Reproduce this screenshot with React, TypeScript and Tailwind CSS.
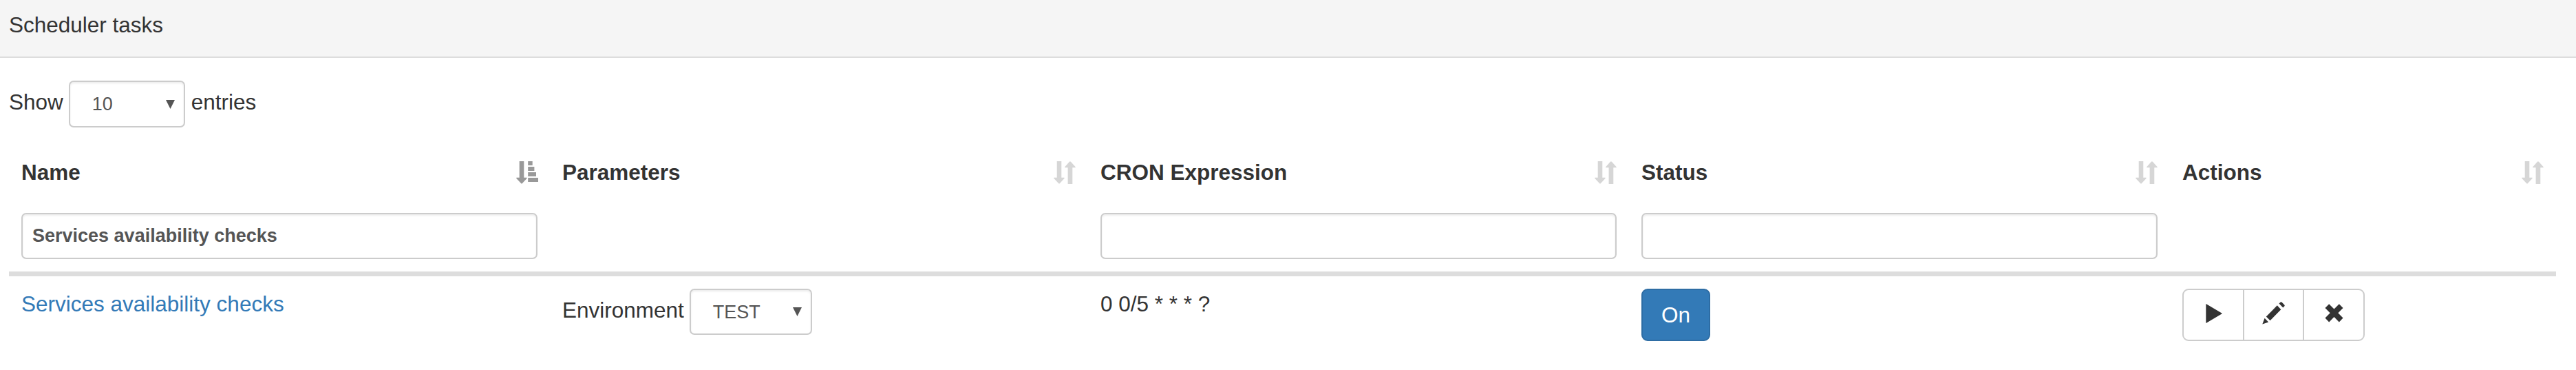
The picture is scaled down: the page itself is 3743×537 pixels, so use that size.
import React from 'react';

interface Column {
    label: string;
    sorted?: boolean;
    filter?: string;
}

const COLUMNS: Column[] = [
    { label: 'Name', sorted: true, filter: 'Services availability checks' },
    { label: 'Parameters' },
    { label: 'CRON Expression', filter: '' },
    { label: 'Status', filter: '' },
    { label: 'Actions' },
];

const GRID = 'grid grid-cols-[786px_782px_786px_786px_561px]';

const SortIcon: React.FC<{ sorted?: boolean }> = ({ sorted }) => (
    <svg
        viewBox="0 0 32 33"
        className={`w-8 h-[33px] mt-1.5 shrink-0 ${sorted ? '-mr-px text-[#999]' : 'text-[#d6d6d6]'}`}
        fill="currentColor"
    >
        <path d="M4.700 0h6.600v23.700h4q.8 .3 .2 1.200L9 32q-1 1-2 0L.4 24.900q-.6-.9 .2-1.200h4.100z" />
        {sorted ? (
            <path d="M17.200 0h6.500v6h-6.500zM17.200 8h9.200v6h-9.200zM17.200 16h11.800v6h-11.800zM17.200 24h14.800v6h-14.800z" />
        ) : (
            <path d="M20.600 33V9.200h-4q-.8-.3-.2-1.200L22.900 .8q1-1 2 0L31.500 8q.6 .9-.2 1.200h-4V33z" />
        )}
    </svg>
);

interface SelectProps {
    value: string;
    className: string;
}

const Select: React.FC<SelectProps> = ({ value, className }) => (
    <div
        className={`flex items-center justify-between border-2 border-[#ccc] rounded-[7px] pl-8 pr-[13px] text-[27px] leading-[38px] text-[#555] shadow-[inset_0_2px_3px_rgba(0,0,0,0.075)] ${className}`}
    >
        <span>{value}</span>
        <svg viewBox="0 0 13 13" className="w-[13px] h-[13px]" fill="currentColor">
            <path d="M0 0h13L6.500 13z" />
        </svg>
    </div>
);

const App: React.FC = () => {
    return (
        <div className="w-[3743px] h-[537px] overflow-hidden bg-white text-[#333] text-[31.5px] leading-[45px] font-['Liberation_Sans',Arial,sans-serif]">
            <div className="h-[84px] px-[13px] pt-3.5 bg-[#f5f5f5] border-b-2 border-[#ddd]">Scheduler tasks</div>

            <div className="flex items-start gap-2 px-[13px] pt-[33px]">
                <span className="pt-[9px]">Show</span>
                <Select value="10" className="w-[169px] h-[68px]" />
                <span className="pt-[9px] pl-px">entries</span>
            </div>

            <div className="ml-[13px] mt-[43px] w-[3701px]">
                <div className={`${GRID} h-[173px] border-b-[7px] border-[#ddd]`}>
                    {COLUMNS.map((col) => (
                        <div key={col.label} className="px-[18px]">
                            <div className="flex items-start justify-between h-[81px] font-bold">
                                <span>{col.label}</span>
                                <SortIcon sorted={col.sorted} />
                            </div>
                            {col.filter !== undefined && (
                                <input
                                    defaultValue={col.filter}
                                    className="block w-full h-[67px] border-2 border-[#ccc] rounded-[7px] px-3.5 pb-px text-[27px] font-bold text-[#555] shadow-[inset_0_2px_3px_rgba(0,0,0,0.075)]"
                                />
                            )}
                        </div>
                    ))}
                </div>

                <div className={`${GRID} pt-[18px]`}>
                    <div className="px-[18px]">
                        <a href="#" className="text-[#337ab7]">Services availability checks</a>
                    </div>
                    <div className="flex items-start gap-2 px-[18px]">
                        <span className="pt-[9px]">Environment</span>
                        <Select value="TEST" className="w-[178px] h-[67px]" />
                    </div>
                    <div className="px-[18px]">0 0/5 * * * ?</div>
                    <div className="px-[18px]">
                        <button className="block w-[100px] h-[76px] border-2 border-[#2e6da4] rounded-[9px] bg-[#337ab7] text-white">
                            On
                        </button>
                    </div>
                    <div className="px-[18px]">
                        <div className="flex w-[265px] h-[76px] border-2 border-[#ccc] rounded-[9px]">
                            <button className="flex items-start w-[88px] pl-8 pt-5 border-r-2 border-[#ccc]">
                                <svg viewBox="0 0 24 28" className="w-6 h-7" fill="currentColor">
                                    <path d="M.3 .5q0-.6 .6-.3L23.300 13.600q.6 .4 0 .8L.9 27.800q-.6 .3-.6-.4z" />
                                </svg>
                            </button>
                            <button className="flex items-start w-[87px] pl-[26px] pt-[17px] border-r-2 border-[#ccc]">
                                <svg viewBox="0 0 33 33" className="w-[33px] h-[33px]" fill="currentColor">
                                    <path d="M24.500 2.500L26.700 .5q1-.7 2 .2L32.300 4.500q.8 .9 .1 1.800L30.300 8.400zM21.800 5.300L27.300 11.200 11.600 27.200 5.800 21.500zM3.600 23.800L9.200 29.500 .3 32.500z" />
                                </svg>
                            </button>
                            <button className="flex items-start pl-[30px] pt-5">
                                <svg viewBox="0 0 27 27" className="w-[27px] h-[27px]" fill="currentColor">
                                    <path d="M6.200 .3L13.500 7.500 20.800 .3 26.500 6.100 19.300 13.300 26.500 20.600 20.800 26.400 13.500 19.100 6.200 26.400 .5 20.600 7.700 13.300 .5 6.100z" />
                                </svg>
                            </button>
                        </div>
                    </div>
                </div>
            </div>
        </div>
    );
};

export default App;
